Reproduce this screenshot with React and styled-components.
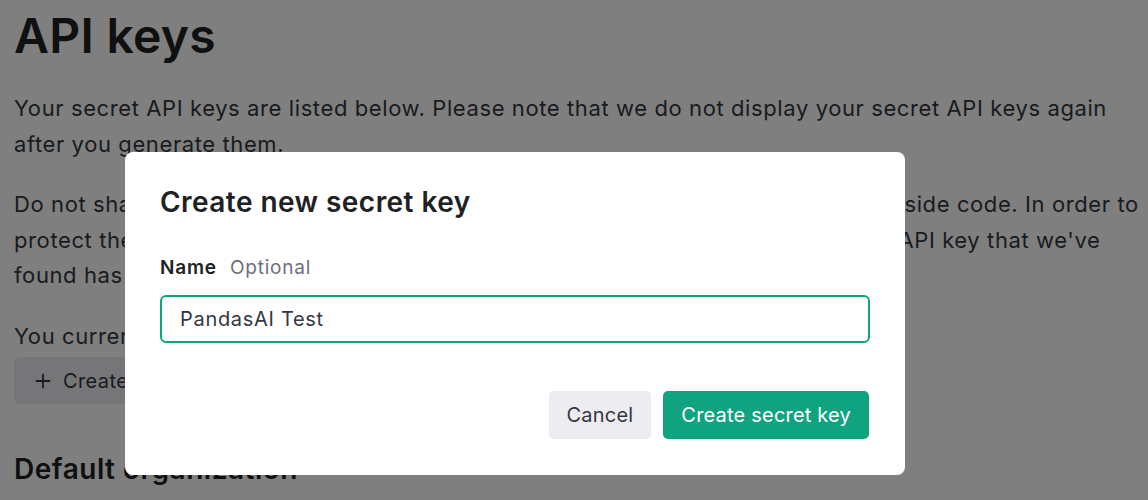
import React from 'react';
import styled, { createGlobalStyle } from 'styled-components';

const GlobalStyle = createGlobalStyle`
  html, body {
    margin: 0;
    padding: 0;
    background: #ffffff;
  }

  body {
    font-family: Inter, "Noto Sans", "Liberation Sans", sans-serif;
    color: #353740;
    overflow: hidden;
  }

  * {
    box-sizing: border-box;
  }
`;

const Page = styled.main`
  width: 1148px;
  height: 500px;
  padding: 7px 14px 0;
  overflow: hidden;
`;

const PageTitle = styled.h1`
  margin: 0;
  font-size: 48px;
  line-height: 58px;
  font-weight: 600;
  color: #202123;
  letter-spacing: 0.3px;
`;

const Paragraph = styled.p`
  margin: ${props => props.top || 25}px 0 0;
  font-size: 22px;
  line-height: 35.5px;
  letter-spacing: 0.6px;
  white-space: nowrap;
  color: #353740;
`;

const GhostButton = styled.button`
  display: flex;
  align-items: center;
  gap: 12px;
  height: 47px;
  margin-top: 3px;
  padding: 0 20px 0 21px;
  border: none;
  border-radius: 6px;
  background: #ececf1;
  color: #353740;
  font-family: inherit;
  font-size: 20px;
  letter-spacing: 0.4px;
`;

const SectionTitle = styled.h2`
  margin: 48px 0 0;
  font-size: 28px;
  line-height: 34px;
  font-weight: 600;
  letter-spacing: 0.5px;
  color: #202123;
`;

const Overlay = styled.div`
  position: fixed;
  inset: 0;
  background: rgba(0, 0, 0, 0.5);
  display: flex;
  align-items: flex-start;
  padding: 152px 0 0 125px;
`;

const Modal = styled.div`
  width: 780px;
  height: 323px;
  background: #ffffff;
  border-radius: 8px;
  padding: 32px 35px 36px;
  display: flex;
  flex-direction: column;
`;

const ModalTitle = styled.h3`
  margin: 0;
  font-size: 28px;
  line-height: 36px;
  font-weight: 600;
  letter-spacing: 0.45px;
  color: #202123;
`;

const Label = styled.label`
  display: flex;
  align-items: baseline;
  gap: 13px;
  margin-top: 36px;
  font-size: 19px;
  line-height: 24px;
  letter-spacing: 0.8px;
`;

const LabelName = styled.span`
  font-weight: 600;
  color: #202123;
`;

const LabelHint = styled.span`
  color: #6e6e80;
`;

const Input = styled.input`
  margin-top: 15px;
  width: 100%;
  height: 48px;
  padding: 0 18px;
  border: 2px solid #10a37f;
  border-radius: 6px;
  outline: none;
  font-family: inherit;
  font-size: 20px;
  letter-spacing: 0.7px;
  color: #353740;
  background: #ffffff;
`;

const Actions = styled.div`
  margin-top: 48px;
  display: flex;
  justify-content: flex-end;
  gap: 12px;
  padding-right: 1px;
`;

const Button = styled.button`
  height: 48px;
  padding: 0 18px;
  border: none;
  border-radius: 5px;
  font-family: inherit;
  font-size: 20px;
  letter-spacing: 0.2px;
  background: ${props => (props.primary ? '#10a37f' : '#ececf1')};
  color: ${props => (props.primary ? '#ffffff' : '#353740')};
`;

const PlusIcon = () => (
  <svg width="16" height="16" viewBox="0 0 16 16" fill="none">
    <path d="M8 1.5v13M1.5 8h13" stroke="currentColor" strokeWidth="1.8" strokeLinecap="round" />
  </svg>
);

export default function App() {
  return (
    <>
      <GlobalStyle />
      <Page>
        <PageTitle>API keys</PageTitle>
        <Paragraph top={26}>
          Your secret API keys are listed below. Please note that we do not display your secret API keys again
          <br />
          after you generate them.
        </Paragraph>
        <Paragraph>
          Do not share your API key with others, or expose it in the browser or other client-side code. In order to
          <br />
          protect the security of your account, OpenAI may also automatically disable any API key that we've
          <br />
          found has leaked publicly.
        </Paragraph>
        <Paragraph>You currently do not have any API keys. Please create one below.</Paragraph>
        <GhostButton>
          <PlusIcon />
          Create new secret key
        </GhostButton>
        <SectionTitle>Default organization</SectionTitle>
      </Page>

      <Overlay>
        <Modal>
          <ModalTitle>Create new secret key</ModalTitle>
          <Label>
            <LabelName>Name</LabelName>
            <LabelHint>Optional</LabelHint>
          </Label>
          <Input defaultValue="PandasAI Test" />
          <Actions>
            <Button>Cancel</Button>
            <Button primary>Create secret key</Button>
          </Actions>
        </Modal>
      </Overlay>
    </>
  );
}
